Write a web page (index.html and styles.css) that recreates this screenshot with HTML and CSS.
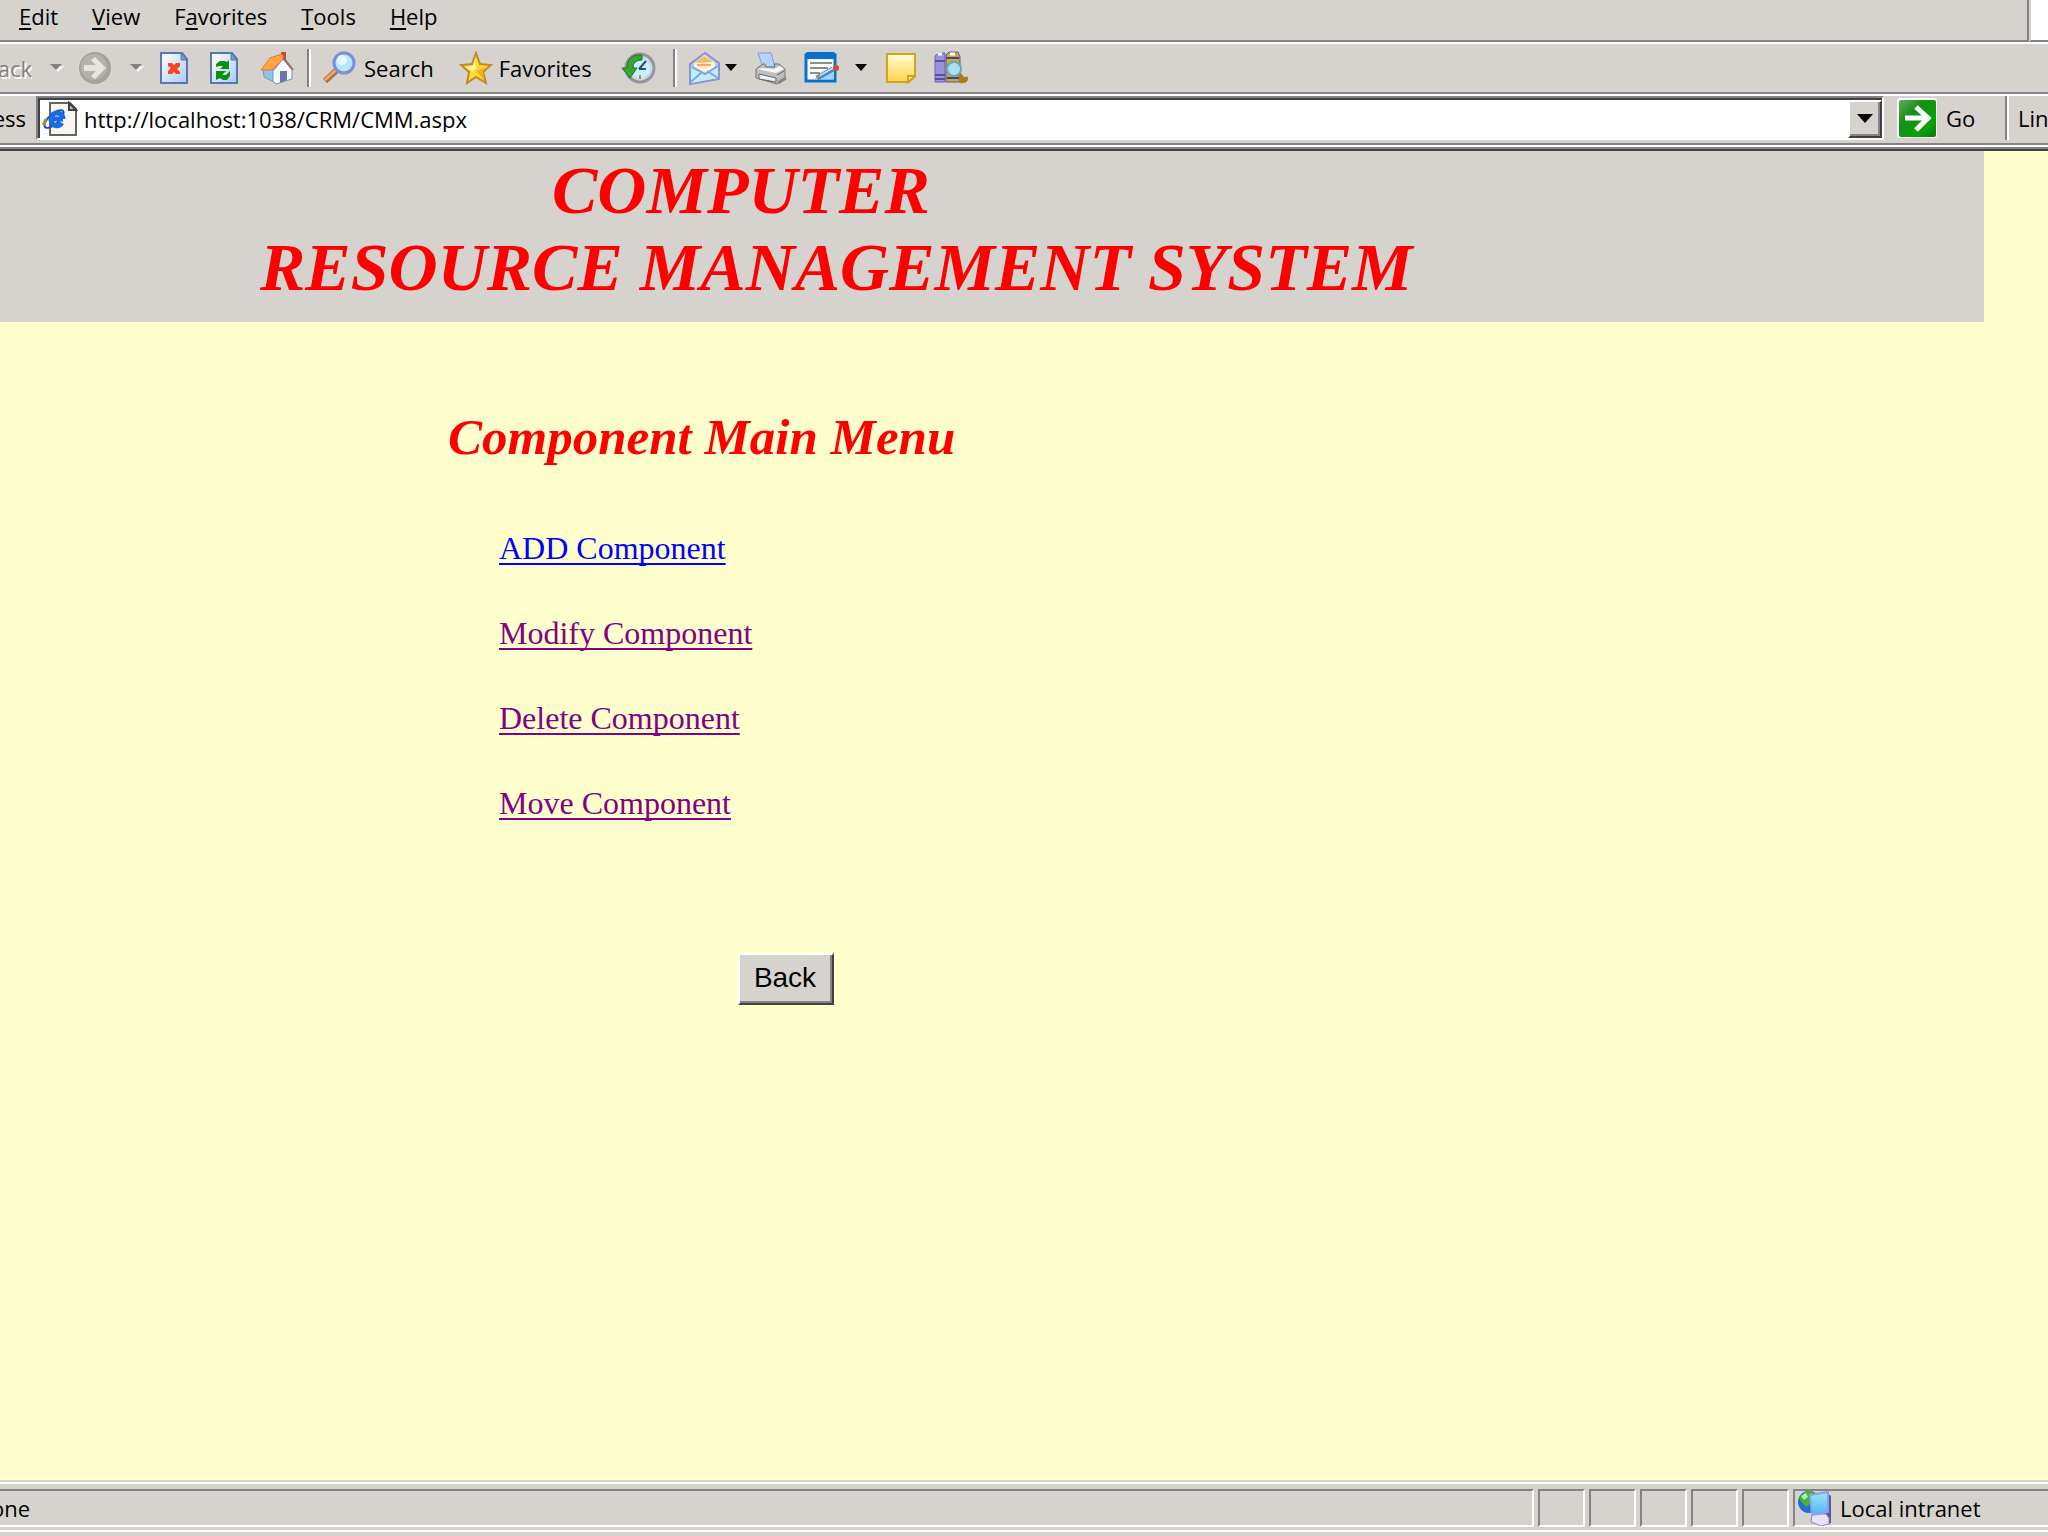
FILE: index.html
```html
<!DOCTYPE html>
<html lang="en">

<head>
    <meta charset="UTF-8">
    <meta name="viewport" content="width=device-width, initial-scale=1.0">
    <title>Component Main Menu</title>
    <link rel="stylesheet" href="styles.css">
</head>

<body>
    <div class="menu-row">
        <nav class="menu-bar">
            <button type="button"><u>E</u>dit</button>
            <button type="button"><u>V</u>iew</button>
            <button type="button">F<u>a</u>vorites</button>
            <button type="button"><u>T</u>ools</button>
            <button type="button"><u>H</u>elp</button>
        </nav>
        <div class="throbber"></div>
    </div>

    <div class="toolbar">
        <button type="button" class="back-nav" disabled><span>Back</span></button>
        <button type="button" class="drop off" aria-label="Back history" disabled>
            <svg width="14" height="8" viewBox="0 0 14 8"><path d="M3 2h11l-6 6z" fill="#fff"/><path d="M0 0h12L6 6z" fill="#848284"/></svg>
        </button>
        <button type="button" class="forward" aria-label="Forward" disabled>
            <svg width="34" height="34" viewBox="0 0 34 34">
                <circle cx="17" cy="17" r="16" fill="#a5a29c"/>
                <circle cx="16" cy="16" r="13" fill="#b5b2ad"/>
                <path d="M6 14h12l-5-5 4-3 11 11-11 11-4-3 5-5H6z" fill="#e7e3de"/>
            </svg>
        </button>
        <button type="button" class="drop off" aria-label="Forward history" disabled>
            <svg width="14" height="8" viewBox="0 0 14 8"><path d="M3 2h11l-6 6z" fill="#fff"/><path d="M0 0h12L6 6z" fill="#848284"/></svg>
        </button>
        <button type="button" class="stop" aria-label="Stop">
            <svg width="28" height="32" viewBox="0 0 28 32">
                <defs>
                    <linearGradient id="sheet" x1="0" y1="0" x2="1" y2="1"><stop offset="0" stop-color="#fff"/><stop offset="1" stop-color="#a9c9f7"/></linearGradient>
                </defs>
                <path d="M1 1h21l5 6v24H1z" fill="url(#sheet)" stroke="#5a75b5" stroke-width="2"/>
                <path d="M21 1v7h6z" fill="#7b9ad6" stroke="#5a75b5"/>
                <path d="M8 11h4l2 2 2-2h4v3l-3 3 3 3v2h-4l-2-2-2 2H8v-3l3-3-3-2z" fill="#f74418"/>
            </svg>
        </button>
        <button type="button" class="refresh" aria-label="Refresh">
            <svg width="28" height="32" viewBox="0 0 28 32">
                <path d="M1 1h21l5 6v24H1z" fill="url(#sheet)" stroke="#5a75b5" stroke-width="2"/>
                <path d="M21 1v7h6z" fill="#7b9ad6" stroke="#5a75b5"/>
                <path d="M6 15V12l4-3h5l2 1 2-2v9h-9l3-3H9z" fill="#089208"/>
                <path d="M20 19v5l-3 4h-4l-3-2-4 2v-9h10l-4 4h4z" fill="#089208"/>
            </svg>
        </button>
        <button type="button" class="home" aria-label="Home">
            <svg width="34" height="34" viewBox="0 0 34 34">
                <path d="M3 17l13-2v17L4 26z" fill="#8fc4e8" stroke="#6b9ac6"/>
                <path d="M13 20L23 8l9 11v9l-16 5-3-3z" fill="#f7faff" stroke="#7b8ec6"/>
                <path d="M20 20h7v9l-7 3z" fill="#6b75ad"/>
                <path d="M21 1h5v10l-5-4z" fill="#c64a29"/>
                <path d="M10 7l12-4 2 4-12 12H1z" fill="#ffa642" stroke="#d67d29"/>
                <path d="M23 6l10 13" stroke="#a5695a" stroke-width="2"/>
            </svg>
        </button>
        <span class="divider"></span>
        <button type="button" class="search">
            <svg width="34" height="34" viewBox="0 0 34 34">
                <path d="M3 30L15 19" stroke="#a5714a" stroke-width="6"/>
                <path d="M3 29L14 19" stroke="#f7a65a" stroke-width="3"/>
                <circle cx="22" cy="12" r="10" fill="#b5e7ff" stroke="#7b8ed6" stroke-width="3"/>
                <circle cx="20" cy="9" r="5" fill="#e7faff"/>
            </svg>
            <span>Search</span>
        </button>
        <button type="button" class="favorites">
            <svg width="34" height="34" viewBox="0 0 34 34">
                <path d="M17 2l4 11 11 1-8 7 3 11-10-6-9 6 2-11-8-7 11-1z" fill="#ffdb31" stroke="#bd8a29" stroke-width="2"/>
                <path d="M16 7l-2 8-8 1 7 4 4-2z" fill="#fff7a5"/>
                <path d="M17 20l8 9-1-9 6-5z" fill="#efb218"/>
            </svg>
            <span>Favorites</span>
        </button>
        <button type="button" class="history" aria-label="History">
            <svg width="34" height="34" viewBox="0 0 34 34">
                <circle cx="18" cy="17" r="14" fill="#c6dbe7" stroke="#94969c" stroke-width="3"/>
                <circle cx="18" cy="17" r="10" fill="#c6efff"/>
                <path d="M17 18l7-8M17 18h7" stroke="#39496b" stroke-width="2"/>
                <path d="M18 24v4" stroke="#e77542" stroke-width="2"/>
                <path d="M20 4C10 3 5 8 5 17H0l8 10 7-10h-4c0-5 3-8 9-8z" fill="#39a631" stroke="#187518"/>
            </svg>
        </button>
        <span class="divider"></span>
        <button type="button" class="mail" aria-label="Mail">
            <svg width="34" height="34" viewBox="0 0 34 34">
                <path d="M2 13L17 2l14 10v16L2 33z" fill="#b5cbf7" stroke="#8c92ce" stroke-width="2"/>
                <path d="M6 13L16 4l11 8v7l-10 3-11-4z" fill="#fff3d6"/>
                <path d="M7 12l9-7 9 6z" fill="#f7ba52"/>
                <path d="M9 14h14" stroke="#f7a663" stroke-width="2"/>
                <path d="M3 16l14 7 13-8v12L3 32z" fill="#bdefff"/>
                <path d="M3 31l11-10M30 27L19 20M4 16l13 7 13-8" fill="none" stroke="#84a6de" stroke-width="2"/>
            </svg>
        </button>
        <button type="button" class="drop mail-drop" aria-label="Mail options">
            <svg width="12" height="8" viewBox="0 0 12 8"><path d="M0 0h12L6 7z"/></svg>
        </button>
        <button type="button" class="print" aria-label="Print">
            <svg width="34" height="34" viewBox="0 0 34 34">
                <path d="M4 2h13l4 14H9z" fill="#b5d3ff" stroke="#7b9ade"/>
                <path d="M2 18l7-5h2l1 3h9l-1-3h5l6 5v9l-8 6-21-6z" fill="#bdbebd" stroke="#737573"/>
                <path d="M3 18l19 4 8-4-4-3-6 3-11-1z" fill="#f7f7f7"/>
                <path d="M5 23l17 4v4L5 28zM23 24l7-4" fill="#efefef" stroke="#636563"/>
                <path d="M24 32l8-5" stroke="#848684" stroke-width="3"/>
            </svg>
        </button>
        <button type="button" class="edit" aria-label="Edit">
            <svg width="36" height="34" viewBox="0 0 36 34">
                <path d="M2 4h29v26H2z" fill="#fff" stroke="#0871ce" stroke-width="3"/>
                <path d="M1 3l2-2h27l2 2v5H1z" fill="#0871ce"/>
                <path d="M17 28L30 15v13z" fill="#a5d3ff"/>
                <path d="M6 12h22M6 17h18M6 22h10" stroke="#8c8e8c" stroke-width="2"/>
                <path d="M13 27l16-9" stroke="#4a86ce" stroke-width="5"/>
                <path d="M15 25l14-8" stroke="#b5e7ff" stroke-width="2"/>
                <path d="M11 28l4-5 2 3z" fill="#bd9242"/>
                <circle cx="32" cy="17" r="3" fill="#d64929"/>
            </svg>
        </button>
        <button type="button" class="drop edit-drop" aria-label="Edit options">
            <svg width="12" height="8" viewBox="0 0 12 8"><path d="M0 0h12L6 7z"/></svg>
        </button>
        <button type="button" class="note" aria-label="Discuss">
            <svg width="30" height="32" viewBox="0 0 30 32">
                <defs>
                    <linearGradient id="paper" x1="0" y1="0" x2="0" y2="1"><stop offset="0" stop-color="#ffffd6"/><stop offset="1" stop-color="#ffd34a"/></linearGradient>
                </defs>
                <path d="M1 2h28v22l-6 6H1z" fill="url(#paper)" stroke="#d6a218" stroke-width="2"/>
                <path d="M22 30v-6h7z" fill="#fff3a5" stroke="#d6a218" stroke-width="2"/>
            </svg>
        </button>
        <button type="button" class="research" aria-label="Research">
            <svg width="34" height="34" viewBox="0 0 34 34">
                <path d="M1 5l4-3h6v29H1z" fill="#9c92de" stroke="#6b61ad"/>
                <path d="M1 10h10M1 24h10M1 28h10" stroke="#5a519c" stroke-width="2"/>
                <path d="M12 4l3-3h9l2 5v25H12z" fill="#c6a652" stroke="#63558c"/>
                <path d="M12 7h13M13 27h12" stroke="#4a457b" stroke-width="2"/>
                <path d="M4 3h4M16 3h5" stroke="#fff" stroke-width="3"/>
                <path d="M24 22l8 9M26 31l8-4" stroke="#a57d18" stroke-width="4"/>
                <circle cx="20" cy="18" r="7" fill="#a5e3ef" stroke="#73a6b5" stroke-width="2"/>
            </svg>
        </button>
    </div>

    <form class="address-bar">
        <label for="address"><span>Address</span></label>
        <div class="combo">
            <svg width="36" height="36" viewBox="0 0 36 36">
                <path d="M8 2h20l6 6v26H8z" fill="#f7f7ef" stroke="#636563" stroke-width="2"/>
                <path d="M27 2v7h7z" fill="#c6c7c6" stroke="#424142" stroke-width="2"/>
                <ellipse cx="12" cy="18" rx="12" ry="5" transform="rotate(-42 12 18)" fill="none" stroke="#1851b5" stroke-width="2"/>
                <path d="M21 18H9M20 22c-3 4-11 4-11-4 0-8 12-8 12 0" fill="none" stroke="#186de7" stroke-width="5"/>
                <path d="M1 24l3-6" stroke="#b5923a" stroke-width="3"/>
            </svg>
            <input type="text" id="address" value="http://localhost:1038/CRM/CMM.aspx">
            <button type="button" class="combo-button" aria-label="Show addresses">
                <svg width="16" height="10" viewBox="0 0 16 10"><path d="M0 0h16L8 9z"/></svg>
            </button>
        </div>
        <button type="button" class="go">
            <svg width="40" height="40" viewBox="0 0 40 40">
                <defs>
                    <linearGradient id="goFill" x1="0" y1="0" x2="1" y2="1"><stop offset="0" stop-color="#63aa63"/><stop offset="0.35" stop-color="#188e18"/><stop offset="0.75" stop-color="#08a208"/><stop offset="1" stop-color="#087508"/></linearGradient>
                </defs>
                <rect width="40" height="40" rx="3" fill="#f7fff7"/>
                <rect x="2" y="2" width="37" height="37" rx="2" fill="url(#goFill)"/>
                <path d="M8 20h22M19 9l12 11-12 12" fill="none" stroke="#fff" stroke-width="5"/>
            </svg>
            <span>Go</span>
        </button>
        <div class="links"><span>Links</span></div>
    </form>

    <main>
        <header>
            <h1><span>COMPUTER</span> RESOURCE MANAGEMENT SYSTEM</h1>
        </header>
        <h2>Component Main Menu</h2>
        <ul class="component-links">
            <li><a href="#add">ADD Component</a></li>
            <li><a href="#modify" class="seen">Modify Component</a></li>
            <li><a href="#delete" class="seen">Delete Component</a></li>
            <li><a href="#move" class="seen">Move Component</a></li>
        </ul>
        <button type="button" class="back-button">Back</button>
    </main>

    <footer class="status-bar">
        <div class="status-text"><span>Done</span></div>
        <div class="pane"></div>
        <div class="pane"></div>
        <div class="pane"></div>
        <div class="pane"></div>
        <div class="pane"></div>
        <div class="zone">
            <svg width="36" height="36" viewBox="0 0 36 36">
                <defs>
                    <linearGradient id="screen" x1="0" y1="0" x2="0" y2="1"><stop offset="0" stop-color="#9ce7ff"/><stop offset="1" stop-color="#52b2f7"/></linearGradient>
                </defs>
                <circle cx="12" cy="12" r="11" fill="#216dd6"/>
                <path d="M2 8l7-7h7v9l-6 7-4-3z" fill="#42b631"/>
                <path d="M4 6l5-3 2 4-4 3z" fill="#adefa5"/>
                <path d="M31 4l3 2v27l-4 2-4-8z" fill="#5a559c"/>
                <path d="M15 24h14l3 4v6l-8 2-10-4z" fill="#e7e3f7" stroke="#8c86bd"/>
                <path d="M13 5l18-3v20l-16 3z" fill="url(#screen)" stroke="#8ca2e7" stroke-width="2"/>
            </svg>
            <span>Local intranet</span>
        </div>
    </footer>
</body>

</html>
```
FILE: styles.css
```css
/* styles.css */
* {
    box-sizing: border-box;
}

body {
    display: flex;
    flex-direction: column;
    min-height: 100vh;
    margin: 0;
    overflow-x: hidden;
    background-color: #d6d3ce;
    color: #000;
    font-family: "Open Sans", Tahoma, sans-serif;
    font-size: 22px;
    line-height: 26px;
}

button {
    margin: 0;
    padding: 0;
    border: none;
    background: none;
    color: inherit;
    font: inherit;
}

svg {
    display: block;
    flex: none;
}

/* Menu */
.menu-row {
    display: flex;
    height: 44px;
    border-bottom: 2px solid #fff;
}

.menu-bar {
    display: flex;
    flex: 1;
    align-items: flex-start;
    gap: 34px;
    padding: 3px 19px;
    border-right: 2px solid #848284;
    border-bottom: 2px solid #848284;
}

.menu-bar u {
    text-underline-offset: 3px;
    text-decoration-thickness: 2px;
    text-decoration-skip-ink: none;
}

.throbber {
    width: 19px;
    border-left: 2px solid #d6d3ce;
    border-bottom: 2px solid #848284;
    background: #fff;
}

/* Toolbar */
.toolbar {
    display: flex;
    align-items: center;
    height: 52px;
    padding-bottom: 2px;
    border-bottom: 2px solid #fff;
    box-shadow: inset 0 -2px #848284;
}

.toolbar button {
    display: flex;
    align-items: center;
    gap: 8px;
}

.toolbar .back-nav {
    justify-content: flex-end;
    width: 32px;
    overflow: hidden;
    color: #848284;
    text-shadow: 2px 2px #fff;
}

.toolbar .off {
    margin: 0 14px 0 18px;
}

.toolbar .stop {
    margin-left: 2px;
}

.toolbar .stop,
.toolbar .refresh {
    margin-right: 22px;
}

.divider {
    width: 4px;
    height: 38px;
    margin: 0 11px 0 13px;
    border-left: 2px solid #848284;
    border-right: 2px solid #fff;
}

.toolbar .favorites {
    gap: 6px;
    margin: 0 30px 0 25px;
}

.toolbar .history {
    margin-right: 4px;
}

.toolbar .mail-drop {
    margin: 0 17px 0 3px;
}

.toolbar .edit {
    margin-left: 16px;
}

.toolbar .edit-drop {
    margin: 0 19px 0 15px;
}

.toolbar .research {
    margin-left: 18px;
}

/* Address bar */
.address-bar {
    display: flex;
    height: 55px;
    padding-bottom: 9px;
    border-bottom: 2px solid #424142;
    box-shadow: inset 0 -2px #848284, inset 0 -4px #fff, inset 0 -6px #848284;
}

.address-bar label {
    display: flex;
    justify-content: flex-end;
    align-items: center;
    width: 36px;
    padding-right: 10px;
    overflow: hidden;
}

.combo {
    display: flex;
    flex: 1;
    align-items: center;
    border: 2px solid;
    border-color: #848284 #fff #fff #848284;
    background: #fff;
    box-shadow: inset 2px 2px #424142;
    padding: 2px 0 0 4px;
}

.combo input {
    flex: 1;
    min-width: 0;
    margin: 0;
    padding: 0 0 0 6px;
    border: none;
    background: none;
    font: inherit;
    outline: none;
}

.combo-button,
.back-button {
    display: flex;
    align-items: center;
    justify-content: center;
    border: 2px solid;
    border-color: #fff #424142 #424142 #fff;
    background: #d6d3ce;
    box-shadow: inset -2px -2px #848284;
}

.combo-button {
    width: 34px;
    height: 38px;
}

.go {
    display: flex;
    align-items: center;
    gap: 9px;
    width: 123px;
    padding-left: 13px;
}

.links {
    display: flex;
    align-items: center;
    width: 41px;
    padding-left: 9px;
    overflow: hidden;
    border-left: 2px solid #fff;
    box-shadow: -2px 0 #848284;
}

/* Page */
main {
    flex: 1;
    background-color: #ffffce;
    font-family: "Liberation Serif", "Times New Roman", serif;
}

header {
    margin-right: 64px;
    padding: 1px 0 16px 260px;
    background-color: #d6d3ce;
}

h1,
h2 {
    margin: 0;
    color: #f00;
    font-style: italic;
}

h1 {
    font-size: 68px;
    line-height: 77px;
}

h1 span {
    display: block;
    padding-left: 292px;
}

h2 {
    margin: 86px 0 0 448px;
    font-size: 51px;
    line-height: 58px;
}

.component-links {
    display: flex;
    flex-direction: column;
    gap: 49px;
    margin: 64px 0 0 499px;
    padding: 0;
    list-style: none;
    font-size: 32px;
    line-height: 36px;
}

.component-links a {
    color: #00f;
    text-underline-offset: 4px;
    text-decoration-thickness: 2px;
    text-decoration-skip-ink: none;
}

.component-links .seen {
    color: #840084;
}

.back-button {
    width: 96px;
    height: 52px;
    margin: 132px 0 32px 738px;
    padding: 0 2px 2px 0;
    font-family: "Liberation Sans", Arial, sans-serif;
    font-size: 28px;
}

/* Status bar */
.status-bar {
    display: flex;
    gap: 4px;
    height: 56px;
    padding: 9px 0 5px;
    border-bottom: 4px solid #d6d3ce;
    box-shadow: inset 0 2px #d6d3ce, inset 0 4px #fff, inset 0 -2px #fff;
}

.status-text,
.pane,
.zone {
    display: flex;
    align-items: center;
    border: 2px solid;
    border-color: #848284 #fff #fff #848284;
}

.status-text {
    flex: 1;
    border-left: none;
}

.status-text span {
    display: flex;
    justify-content: flex-end;
    width: 30px;
    overflow: hidden;
}

.pane {
    width: 47px;
}

.zone {
    width: 255px;
    gap: 7px;
    padding-left: 2px;
    border-right: none;
}
```
